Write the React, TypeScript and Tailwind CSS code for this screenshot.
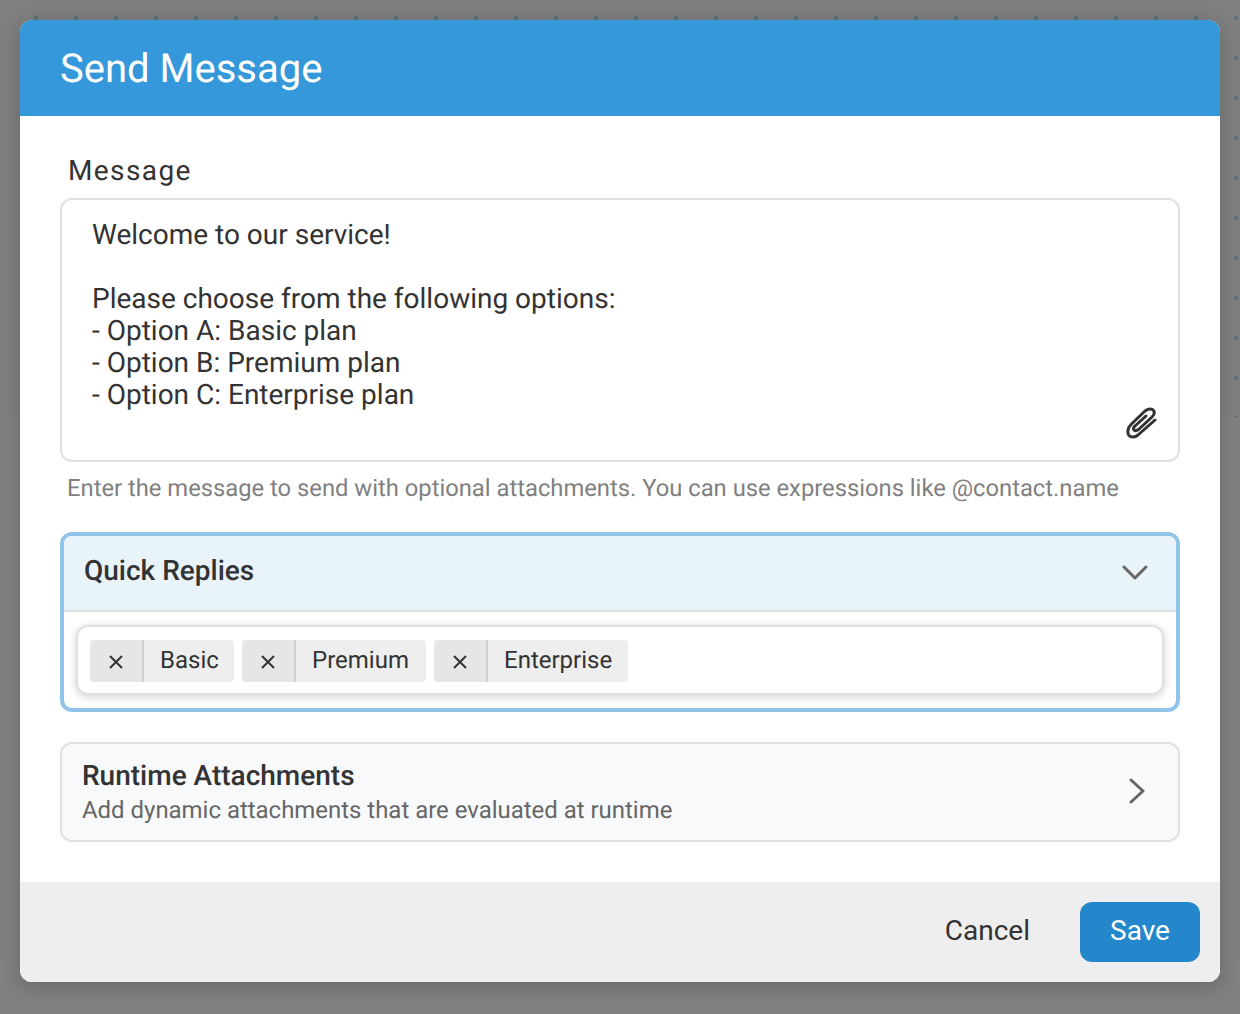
import React from "react";

const font = { fontFamily: "Roboto, sans-serif" };

function Tag({ label, w }: { label: string; w: string }) {
  return (
    <div className={`flex h-[42px] items-stretch rounded-[4px] bg-[#eeeeee] text-[24px] text-[#333333] ${w}`}>
      <div className="flex w-[54px] shrink-0 items-center justify-center rounded-l-[4px] border-r-2 border-[#d0d0d0] bg-[#e6e6e6]">
        <svg className="mt-[2px]" width="16" height="16" viewBox="0 0 16 16" fill="none" stroke="#333333" strokeWidth="2">
          <path d="M2 2 L14 14 M14 2 L2 14" />
        </svg>
      </div>
      <div className="flex flex-1 items-center pb-[2px] pl-4">{label}</div>
    </div>
  );
}

export default function App() {
  return (
    <div className="relative h-[1014px] w-[1240px] overflow-hidden bg-[#808080] [text-rendering:geometricPrecision]" style={font}>
      <div className="absolute inset-x-0 top-0 h-[417px] bg-[#7f7f7f] bg-[radial-gradient(circle,#5f6f7f_2px,transparent_2.5px)] bg-[length:40px_40px] bg-[position:16px_-2px]" />
      <div className="relative m-5 flex h-[962px] w-[1200px] flex-col overflow-hidden rounded-[12px] bg-white shadow-[0_4px_20px_rgba(0,0,0,0.2)]">
        <header className="flex h-24 shrink-0 items-center bg-[#3498db] pl-10 pt-[2px] text-[40px] font-normal text-white">
          Send Message
        </header>
        <main className="flex flex-1 flex-col px-10 pt-6">
          <label className="ml-2 block h-[36px] text-[28px] tracking-[1.4px] text-[#333333] leading-[62px]">Message</label>
          <div className="relative mt-[22px] h-[264px] rounded-[12px] border-2 border-[#e0e0e0] px-[30px] pt-[19px] text-[28px] leading-[32px] text-[#333333]">
            <div>Welcome to our service!</div>
            <div className="h-8" />
            <div>Please choose from the following options:</div>
            <div>- Option A: Basic plan</div>
            <div>- Option B: Premium plan</div>
            <div>- Option C: Enterprise plan</div>
            <svg className="absolute bottom-[21px] right-[21px]" width="32" height="32" viewBox="0 0 32 32" fill="none" stroke="#333333" strokeWidth="3" strokeLinecap="round" strokeLinejoin="round">
              <path d="M30 13 L13 28 C10 30.5 6 30.5 4 28.5 C2 26 2.5 21 6 17.5 L20 4 C23 1.5 27 1.5 28.5 3.5 C30 5.5 29 8 27 10 L13.5 22.5 C11.5 24 9.5 24 8.8 22.5 C8.2 21.5 8.8 20 10 19 L21 9" />
            </svg>
          </div>
          <p className="ml-[7px] mt-[10px] text-[23.78px] leading-[32px] text-[#808080]">
            Enter the message to send with optional attachments. You can use expressions like @contact.name
          </p>
          <section className="mt-[28px] h-[180px] overflow-hidden rounded-[12px] border-4 border-[#8fc3e8] bg-white">
            <div className="flex h-[76px] items-center justify-between border-b-2 border-[#e0e0e0] bg-[#e8f4f9] pb-[5px] pl-5 pr-7 text-[28px] font-medium text-[#333333]">
              <span>Quick Replies</span>
              <svg className="mt-1" width="26" height="16" viewBox="0 0 26 16" fill="none" stroke="#666666" strokeWidth="3" strokeLinecap="round" strokeLinejoin="round">
                <path d="M2 2 L13 13 L24 2" />
              </svg>
            </div>
            <div className="px-3 pt-[13px]">
              <div className="flex h-[70px] items-center gap-2 rounded-[12px] border-2 border-[#e0e0e0] bg-white pl-3 pt-[2px] shadow-[0_2px_8px_rgba(0,0,0,0.18)]">
                <Tag label="Basic" w="w-[144px]" />
                <Tag label="Premium" w="w-[184px]" />
                <Tag label="Enterprise" w="w-[194px]" />
              </div>
            </div>
          </section>
          <section className="mt-[30px] flex h-[100px] items-center justify-between rounded-[12px] border-2 border-[#e0e0e0] bg-[#f8f9fa] pl-5 pr-[33px]">
            <div>
              <div className="mt-[2px] text-[28px] font-medium leading-[32px] text-[#333333]">Runtime Attachments</div>
              <div className="mt-[2px] text-[23.95px] leading-[32px] text-[#666666]">Add dynamic attachments that are evaluated at runtime</div>
            </div>
            <svg className="mb-[2px]" width="16" height="26" viewBox="0 0 16 26" fill="none" stroke="#666666" strokeWidth="3" strokeLinecap="round" strokeLinejoin="round">
              <path d="M2 2 L14 13 L2 24" />
            </svg>
          </section>
        </main>
        <footer className="flex h-[100px] shrink-0 items-center justify-end bg-[#eeeeee] pr-5">
          <button className="mr-[50px] pb-[2px] text-[28px] text-[#333333]">Cancel</button>
          <button className="h-[60px] w-[120px] rounded-[12px] bg-[#2587cb] pb-[2px] text-[28px] text-white">Save</button>
        </footer>
      </div>
    </div>
  );
}
